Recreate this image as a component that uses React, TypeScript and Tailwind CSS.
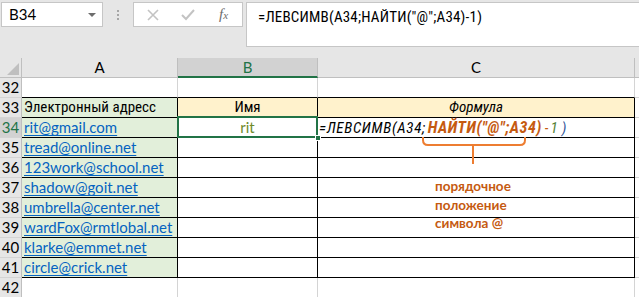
import React from 'react';

const emails = [
  'rit@gmail.com',
  'tread@online.net',
  '123work@school.net',
  'shadow@goit.net',
  'umbrella@center.net',
  'wardFox@rmtlobal.net',
  'klarke@emmet.net',
  'circle@crick.net',
];

const rowNums = [32, 33, 34, 35, 36, 37, 38, 39, 40, 41, 42];

const cyr = "font-['Roboto_Condensed','Roboto',sans-serif]";

function FormulaCell() {
  return (
    <span className={`italic whitespace-nowrap ${cyr}`}>
      <span className="text-black tracking-[0.7px]">=ЛЕВСИМВ(A34;</span>
      <span className="font-bold text-[16px] text-[#c55a11] ml-[2px] tracking-[0.5px]">НАЙТИ("@";A34)</span>
      <span className="text-[#c55a11] ml-[3px]">-</span>
      <span className="text-[#548235] ml-[2px]">1</span>
      <span className="text-[#2f5597] ml-[4px]">)</span>
    </span>
  );
}

export default function App() {
  return (
    <div className="w-[639px] h-[297px] overflow-hidden bg-white font-['Lato','Roboto',sans-serif] text-[15px] text-black">
      {/* Formula bar area */}
      <div className="h-[58px] bg-[#e6e6e6] flex items-start">
        <div className="mt-[2px] ml-[1px] w-[102px] h-[25px] bg-white border border-[#c6c6c6] flex items-center justify-between pl-[7px] pr-[6px]">
          <span className="leading-none">B34</span>
          <span className="w-0 h-0 border-l-[4px] border-r-[4px] border-t-[4px] border-l-transparent border-r-transparent border-t-[#6d6d6d]" />
        </div>
        <div className="w-[30px] h-[29px] flex flex-col items-center justify-center gap-[2px]">
          <span className="w-[2px] h-[2px] bg-[#a6a6a6]" />
          <span className="w-[2px] h-[2px] bg-[#a6a6a6]" />
          <span className="w-[2px] h-[2px] bg-[#a6a6a6]" />
        </div>
        <div className="mt-[2px] w-[110px] h-[25px] bg-white border border-[#c6c6c6] flex items-center">
          <svg width="12" height="12" viewBox="0 0 12 12" className="ml-[13px]">
            <path d="M1 1 L11 11 M11 1 L1 11" stroke="#c3c3c3" strokeWidth="1.6" fill="none" />
          </svg>
          <svg width="14" height="12" viewBox="0 0 14 12" className="ml-[22px]">
            <path d="M1 6 L5 10 L13 1" stroke="#c3c3c3" strokeWidth="2" fill="none" />
          </svg>
          <span className="ml-[24px] italic font-['Liberation_Serif',serif] text-[#6d6d6d] text-[15px] leading-none">
            f<span className="text-[11px]">x</span>
          </span>
        </div>
        <div className={`mt-[2px] ml-[3px] flex-1 h-[45px] bg-white border-t border-l border-b border-[#c6c6c6] pl-[11px] pt-[4px] leading-[20px] tracking-[0.2px] ${cyr}`}>
          =ЛЕВСИМВ(A34;НАЙТИ("@";A34)-1)
        </div>
      </div>

      {/* Sheet */}
      <div className="relative">
        <div className="grid grid-cols-[22px_156px_140px_317px_1fr] auto-rows-[20px]">
          {/* column headers */}
          <div className="bg-[#e6e6e6] border-r border-b border-[#bfbfbf] flex items-end justify-end p-[2px]">
            <svg width="12" height="12" viewBox="0 0 12 12">
              <path d="M12 0 L12 12 L0 12 Z" fill="#bfbfbf" />
            </svg>
          </div>
          <div className="bg-[#e6e6e6] border-r border-b border-[#bfbfbf] flex items-center justify-center">A</div>
          <div className="bg-[#d2d2d2] border-r border-[#bfbfbf] border-b-2 border-b-[#217346] flex items-center justify-center text-[#217346]">B</div>
          <div className="bg-[#e6e6e6] border-r border-b border-[#bfbfbf] flex items-center justify-center">C</div>
          <div className="bg-[#e6e6e6] border-b border-[#bfbfbf]" />

          {rowNums.map((r) => {
            const inTable = r >= 33 && r <= 41;
            const bottomBlack = r >= 32 && r <= 41;
            const bottom = bottomBlack ? 'border-b-black' : 'border-b-[#d4d4d4]';
            const right = inTable ? 'border-r-black' : 'border-r-[#d4d4d4]';
            const isSel = r === 34;
            const email = r >= 34 ? emails[r - 34] : null;
            return (
              <React.Fragment key={r}>
                <div
                  className={`border-r border-b border-r-[#bfbfbf] border-b-[#d4d4d4] flex items-center justify-center ${
                    isSel ? 'bg-[#d2d2d2] text-[#217346]' : 'bg-[#e6e6e6]'
                  }`}
                >
                  {r}
                </div>
                <div
                  className={`border-r border-b ${right} ${bottom} ${inTable ? 'bg-[#e2efda]' : 'bg-white'} flex items-center pl-[2px] whitespace-nowrap overflow-hidden`}
                >
                  {r === 33 && <span className={cyr}>Электронный адресс</span>}
                  {email && <span className="text-[#0563c1] underline underline-offset-2">{email}</span>}
                </div>
                <div
                  className={`border-r border-b ${right} ${bottom} ${r === 33 ? 'bg-[#fff2cc]' : 'bg-white'} flex items-center justify-center`}
                >
                  {r === 33 && <span className={cyr}>Имя</span>}
                  {r === 34 && <span className="text-[#6f8a2a]">rit</span>}
                </div>
                <div
                  className={`border-r border-b ${right} ${bottom} ${r === 33 ? 'bg-[#fff2cc]' : 'bg-white'} flex items-center whitespace-nowrap ${
                    r === 33 ? 'justify-center' : 'pl-[1px]'
                  }`}
                >
                  {r === 33 && <span className={`italic ${cyr}`}>Формула</span>}
                  {r === 34 && <FormulaCell />}
                </div>
                <div className="border-b border-b-[#d4d4d4] bg-white" />
              </React.Fragment>
            );
          })}
        </div>

        {/* selection */}
        <div className="absolute left-[177px] top-[58px] w-[141px] h-[22px] border-2 border-[#217346] pointer-events-none" />
        <div className="absolute left-[315px] top-[77px] w-[6px] h-[6px] bg-[#217346] border border-white" />

        {/* bracket */}
        <svg className="absolute left-[421px] top-[79px]" width="106" height="30" viewBox="0 0 106 30">
          <path
            d="M2 0 L2 3 Q2 8 7 8 L99 8 Q104 8 104 3 L104 0 M52 8 L52 27"
            stroke="#ed7d31"
            strokeWidth="2"
            fill="none"
          />
        </svg>

        {/* note */}
        <div className="absolute left-[435px] top-[119px] text-[13.5px] font-bold leading-[18.5px] text-[#c55a11]">
          <div>порядочное</div>
          <div>положение</div>
          <div>символа @</div>
        </div>
      </div>
    </div>
  );
}
